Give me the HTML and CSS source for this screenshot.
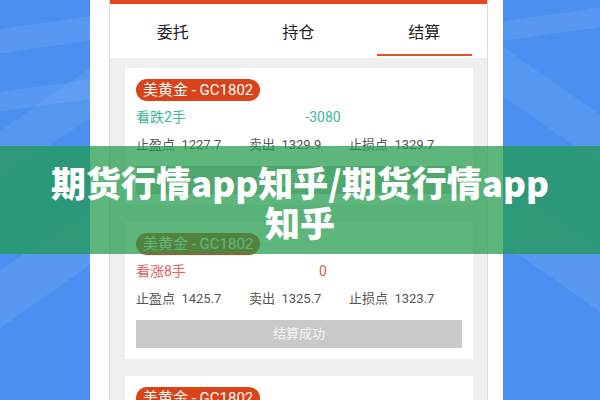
FILE: index.html
```html
<!DOCTYPE html>
<html lang="zh-CN">
<head>
    <meta charset="UTF-8">
    <meta name="viewport" content="width=device-width, initial-scale=1.0">
    <title>期货行情app知乎</title>
    <link rel="stylesheet" href="styles.css">
</head>
<body>

    <div class="phone">
        <div class="screen">
            <div class="top-bar"></div>

            <nav class="tabs">
                <div class="tab">委托</div>
                <div class="tab">持仓</div>
                <div class="tab active">结算</div>
            </nav>

            <div class="list">
                <div class="card">
                    <span class="pill">美黄金 - GC1802</span>
                    <div class="position down">
                        <span class="name">看跌2手</span>
                        <span class="profit">-3080</span>
                    </div>
                    <div class="prices">
                        <span>止盈点&nbsp; 1227.7</span>
                        <span>卖出&nbsp; 1329.9</span>
                        <span>止损点&nbsp; 1329.7</span>
                    </div>
                    <div class="settled">结算成功</div>
                </div>

                <div class="card">
                    <span class="pill">美黄金 - GC1802</span>
                    <div class="position up">
                        <span class="name">看涨8手</span>
                        <span class="profit">0</span>
                    </div>
                    <div class="prices">
                        <span>止盈点&nbsp; 1425.7</span>
                        <span>卖出&nbsp; 1325.7</span>
                        <span>止损点&nbsp; 1323.7</span>
                    </div>
                    <div class="settled">结算成功</div>
                </div>

                <div class="card">
                    <span class="pill">美黄金 - GC1802</span>
                </div>
            </div>
        </div>
    </div>

    <div class="banner">
        <h1>期货行情app知乎/期货行情app<br>知乎</h1>
    </div>

</body>
</html>
```

FILE: styles.css
```css
/* Reset */
* {
    box-sizing: border-box;
    margin: 0;
    padding: 0;
}

body {
    width: 600px;
    height: 400px;
    overflow: hidden;
    position: relative;
    font-family: Roboto, "Noto Sans CJK SC", sans-serif;
    background:
        linear-gradient(172deg, transparent 0 6%, rgba(255, 255, 255, 0.07) 6% 11%, transparent 11% 19%, rgba(255, 255, 255, 0.07) 19% 23%, transparent 23%),
        linear-gradient(35deg, transparent 0 62%, rgba(255, 255, 255, 0.07) 62% 70%, transparent 70% 80%, rgba(255, 255, 255, 0.06) 80% 86%, transparent 86%),
        linear-gradient(-35deg, transparent 0 60%, rgba(255, 255, 255, 0.07) 60% 67%, transparent 67% 78%, rgba(255, 255, 255, 0.06) 78% 84%, transparent 84%),
        #4b90f1;
}

/* Device frame */
.phone {
    width: 413px;
    height: 400px;
    margin-left: 90px;
    padding: 0 15px 0 19px;
    background: #fdfdfd;
}

.screen {
    height: 100%;
    background: #efefef;
    border-left: 1px solid #dcdcdc;
    border-right: 1px solid #dcdcdc;
}

.top-bar {
    height: 4px;
    background: #e5461b;
}

/* Tabs */
.tabs {
    display: grid;
    grid-template-columns: repeat(3, 1fr);
    height: 54px;
    background: #fff;
}

.tab {
    display: flex;
    align-items: center;
    justify-content: center;
    position: relative;
    font-size: 16px;
    color: #222;
}

.tab.active::after {
    content: "";
    position: absolute;
    bottom: 2px;
    width: 95px;
    height: 2px;
    background: #d9532c;
}

/* Settlement cards */
.list {
    padding: 10px 14px 0 15px;
}

.card {
    background: #fff;
    padding: 11px;
    margin-bottom: 17px;
}

.pill {
    display: inline-block;
    height: 22px;
    line-height: 22px;
    padding: 0 7px;
    border-radius: 11px;
    background: #d8431a;
    color: #fff;
    font-size: 15px;
}

.position {
    display: flex;
    height: 20px;
    line-height: 20px;
    margin-top: 6px;
    font-size: 14px;
}

.position .name {
    width: 150px;
}

.position .profit {
    width: 74px;
    text-align: center;
}

.position.down {
    color: #3cb59a;
}

.position.up {
    color: #e0605c;
}

.prices {
    display: grid;
    grid-template-columns: 113px 100px 1fr;
    height: 20px;
    line-height: 20px;
    margin-top: 8px;
    font-size: 13px;
    color: #555;
}

.settled {
    height: 28px;
    line-height: 28px;
    margin-top: 11px;
    background: #c9c9c9;
    color: #f4f4f4;
    font-size: 13px;
    text-align: center;
}

/* Title banner */
.banner {
    position: absolute;
    left: 0;
    right: 0;
    top: 146px;
    height: 108px;
    padding-top: 16px;
    background: rgba(30, 155, 75, 0.72);
    text-align: center;
}

.banner h1 {
    font-family: "Noto Sans CJK SC", sans-serif;
    font-weight: 900;
    font-size: 35px;
    line-height: 40px;
    color: #fff;
}
```
